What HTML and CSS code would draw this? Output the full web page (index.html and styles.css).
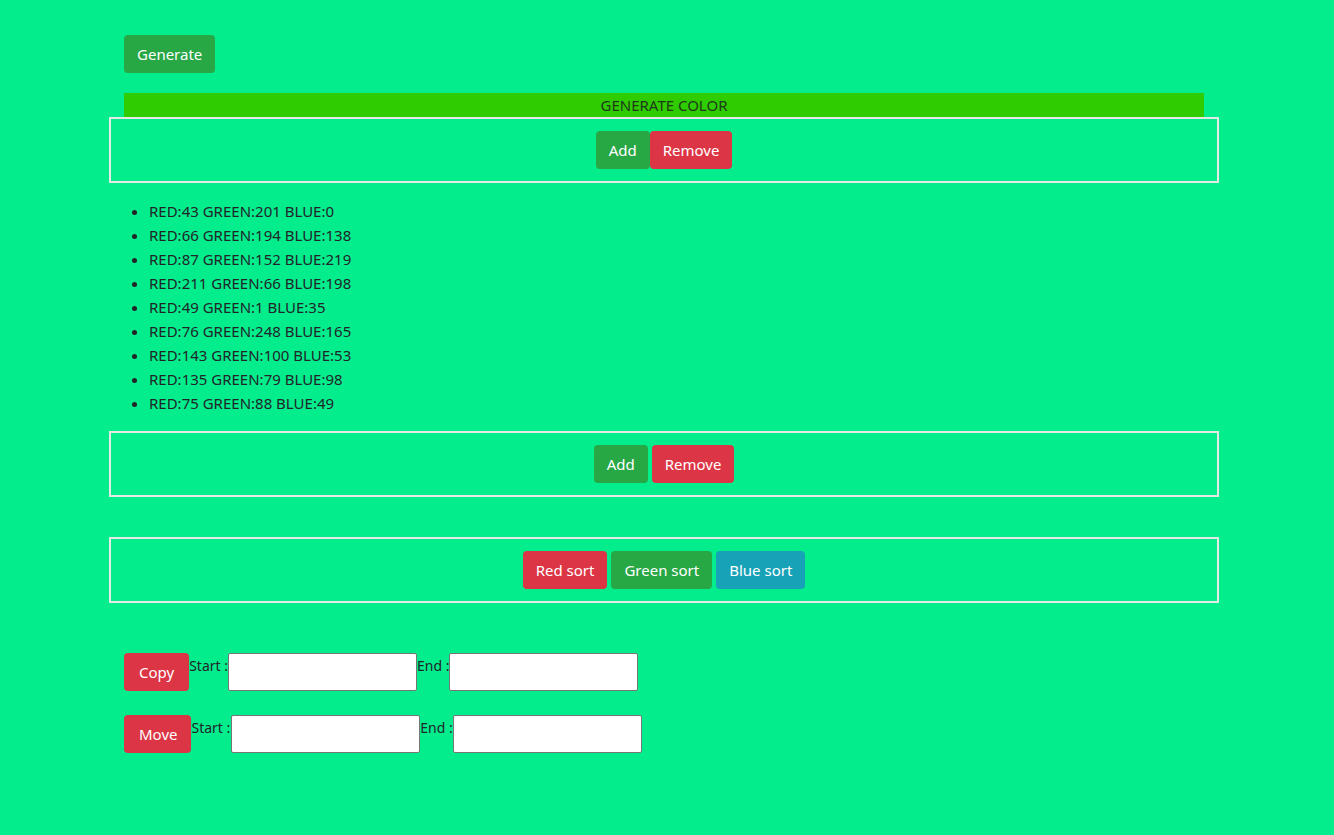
FILE: index.html
```html
<!DOCTYPE html>
<html>
<head>
<meta charset="utf-8">
<link rel="stylesheet" href="styles.css">
</head>
<body>
<div class="container">
  <div class="top"><button class="btn btn-green">Generate</button></div>
  <div class="bar">GENERATE COLOR</div>
  <div class="box"><button class="btn btn-green">Add</button><button class="btn btn-red">Remove</button></div>
  <ul class="colors">
    <li>RED:43 GREEN:201 BLUE:0</li>
    <li>RED:66 GREEN:194 BLUE:138</li>
    <li>RED:87 GREEN:152 BLUE:219</li>
    <li>RED:211 GREEN:66 BLUE:198</li>
    <li>RED:49 GREEN:1 BLUE:35</li>
    <li>RED:76 GREEN:248 BLUE:165</li>
    <li>RED:143 GREEN:100 BLUE:53</li>
    <li>RED:135 GREEN:79 BLUE:98</li>
    <li>RED:75 GREEN:88 BLUE:49</li>
  </ul>
  <div class="box gap4"><button class="btn btn-green">Add</button><button class="btn btn-red">Remove</button></div>
  <div class="box sort gap4"><button class="btn btn-red">Red sort</button><button class="btn btn-green">Green sort</button><button class="btn btn-blue">Blue sort</button></div>
  <div class="row first"><button class="btn btn-red btn-copy">Copy</button><span class="lbl">Start :</span><input class="field" type="text"><span class="lbl">End :</span><input class="field" type="text"></div>
  <div class="row"><button class="btn btn-red btn-move">Move</button><span class="lbl lbl-wide">Start :</span><input class="field" type="text"><span class="lbl">End :</span><input class="field" type="text"></div>
</div>
</body>
</html>
```
FILE: styles.css
```css
html, body {
  margin: 0;
  padding: 0;
  background: #04ed8d;
}
body {
  font-family: "Noto Sans", "Open Sans", sans-serif;
  font-size: 15px;
  color: #212529;
  min-height: 835px;
}
.container {
  margin-left: 109px;
  width: 1110px;
}
.top {
  padding: 35px 15px 0;
}
.btn {
  font-family: inherit;
  font-size: 15px;
  line-height: 24px;
  padding: 7px 13px;
  height: 38px;
  border: 0;
  border-radius: 4px;
  color: #fff;
  cursor: pointer;
}
.btn-green { background: #28a745; }
.btn-red { background: #dc3545; }
.btn-blue { background: #17a2b8; }
.btn-copy { padding: 7px 15px; }
.btn-move { padding: 7px 14px 7px 15px; }
.bar {
  margin: 20px 15px 0;
  background: #2ecc00;
  height: 24px;
  line-height: 24px;
  text-align: center;
  font-size: 15px;
  color: #1f3a1a;
}
.box {
  border: 2px solid #e6e9e6;
  padding: 12px;
  display: flex;
  justify-content: center;
}
.gap4 { gap: 4px; }
.sort { margin-top: 40px; gap: 4px; }
.colors {
  margin: 16px 0;
  padding-left: 40px;
  line-height: 24px;
}
.row {
  display: flex;
  align-items: flex-start;
  padding-left: 15px;
  margin-top: 24px;
}
.row.first { margin-top: 50px; }
.lbl {
  font-size: 14px;
  line-height: 24px;
  margin-top: 1px;
}
.lbl-wide { padding-right: 1px; }
.field {
  width: 189px;
  height: 38px;
  box-sizing: border-box;
  border: 1px solid #767676;
  border-radius: 2px;
  background: #fff;
  margin: 0;
  padding: 0 4px;
}
```
